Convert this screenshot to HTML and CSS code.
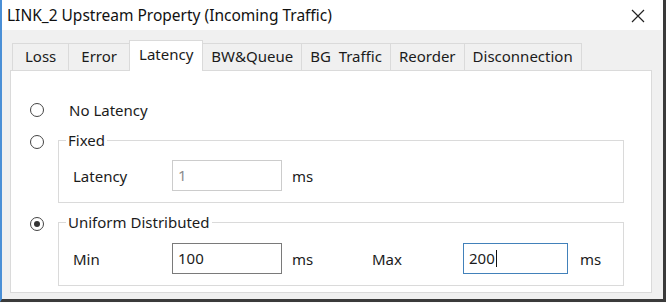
FILE: index.html
```html
<!DOCTYPE html>
<html>
  <head>
    <meta charset="UTF-8">
    <title>LINK_2 Upstream Property</title>
    <link rel="stylesheet" href="styles.css">
  </head>
  <body>
    <div class="window">
      <div class="title-bar">
        <span class="title">LINK_2 Upstream Property (Incoming Traffic)</span>
        <svg class="close" width="14" height="14" viewBox="0 0 14 14">
          <path d="M1 1 L13 13 M13 1 L1 13" stroke="#222" stroke-width="1.2" fill="none"/>
        </svg>
      </div>

      <div class="tabs">
        <div class="tab tab-short">Loss</div>
        <div class="tab tab-short">Error</div>
        <div class="tab tab-active">Latency</div>
        <div class="tab">BW&amp;Queue</div>
        <div class="tab">BG&nbsp; Traffic</div>
        <div class="tab">Reorder</div>
        <div class="tab tab-last">Disconnection</div>
      </div>

      <div class="panel">
        <div class="option">
          <span class="radio"></span>
          <span class="option-label">No Latency</span>
        </div>

        <div class="option option-group">
          <span class="radio"></span>
          <fieldset class="group">
            <legend>Fixed</legend>
            <div class="field">
              <span class="field-label">Latency</span>
              <span class="textbox textbox-disabled">1</span>
              <span class="unit">ms</span>
            </div>
          </fieldset>
        </div>

        <div class="option option-group option-uniform">
          <span class="radio radio-checked"></span>
          <fieldset class="group">
            <legend>Uniform Distributed</legend>
            <div class="field field-uniform">
              <span class="field-label">Min</span>
              <span class="textbox">100</span>
              <span class="unit">ms</span>
              <span class="field-label max-label">Max</span>
              <span class="textbox textbox-focus">200<span class="caret"></span></span>
              <span class="unit unit-max">ms</span>
            </div>
          </fieldset>
        </div>
      </div>
    </div>
  </body>
</html>
```

FILE: styles.css
```css
/* Variables */
:root {
	--face: #f0f0f0;
	--line: #dadada;
	--text: #1b1b1b;
	--frame: #3a3a3a;
}

* {
	margin: 0;
	padding: 0;
	box-sizing: border-box;
}

body {
	font-family: "Noto Sans", "Open Sans", sans-serif;
	font-size: 15px;
	color: var(--text);
	background: #fafafa;
}

/* Window frame */
.window {
	width: 666px;
	height: 302px;
	border-left: 2px solid #4a8fd6;
	border-right: 3px solid var(--frame);
	border-bottom: 3px solid var(--frame);
	background: var(--face);
}

.title-bar {
	height: 30px;
	background: #ffffff;
	display: flex;
	align-items: center;
	justify-content: space-between;
	padding: 0 18px 0 5px;
}

.title {
	font-size: 15.5px;
	color: #111;
}

.close {
	margin-top: 1px;
}

/* Tabs */
.tabs {
	display: flex;
	align-items: flex-end;
	height: 40px;
	padding-left: 10px;
}

.tab {
	height: 27px;
	line-height: 25px;
	padding: 0 8px;
	border: 1px solid var(--line);
	border-right: none;
	border-bottom: none;
	background: var(--face);
}

.tab-short {
	padding: 0 12px;
}

.tab-last {
	border-right: 1px solid var(--line);
}

.tab-active {
	height: 31px;
	line-height: 27px;
	padding: 0 9px;
	background: #ffffff;
	border-right: 1px solid var(--line);
	margin-right: -1px;
	margin-bottom: -1px;
	position: relative;
}

/* Panel */
.panel {
	margin-left: 8px;
	width: 642px;
	height: 223px;
	background: #ffffff;
	border: 1px solid var(--line);
	padding-top: 29px;
}

.option {
	display: flex;
	align-items: flex-start;
	padding-left: 19px;
	line-height: 20px;
}

.radio {
	width: 14px;
	height: 14px;
	margin-top: 3px;
	border: 1px solid #444;
	border-radius: 50%;
	display: flex;
	align-items: center;
	justify-content: center;
	flex-shrink: 0;
}

.radio-checked::after {
	content: "";
	width: 6px;
	height: 6px;
	border-radius: 50%;
	background: #333;
}

.option-label {
	margin-left: 25px;
}

.option-group {
	margin-top: 10px;
}

.option-group .radio {
	margin-top: 5px;
}

.option-uniform {
	margin-top: 9px;
}

/* Group boxes */
.group {
	margin-left: 14px;
	width: 566px;
	border: 1px solid var(--line);
	padding: 0 0 11px 7px;
}

.group legend {
	padding: 0 2px;
	line-height: 20px;
}

.field {
	display: flex;
	align-items: center;
	margin: 10px 0 0 7px;
}

.field-uniform {
	margin-top: 11px;
}

.field-label {
	width: 99px;
}

.max-label {
	width: 91px;
}

.textbox {
	width: 110px;
	height: 31px;
	line-height: 29px;
	padding-left: 5px;
	border: 1px solid #7a7a7a;
	background: #ffffff;
	display: flex;
	align-items: center;
}

.textbox-disabled {
	border-color: #cccccc;
	color: #8c8c8c;
}

.textbox-focus {
	width: 105px;
	border-color: #4281ba;
}

.caret {
	width: 1px;
	height: 17px;
	background: #111;
	margin-left: 1px;
}

.unit {
	margin-left: 10px;
	width: 80px;
}

.unit-max {
	margin-left: 12px;
	width: auto;
}
```
